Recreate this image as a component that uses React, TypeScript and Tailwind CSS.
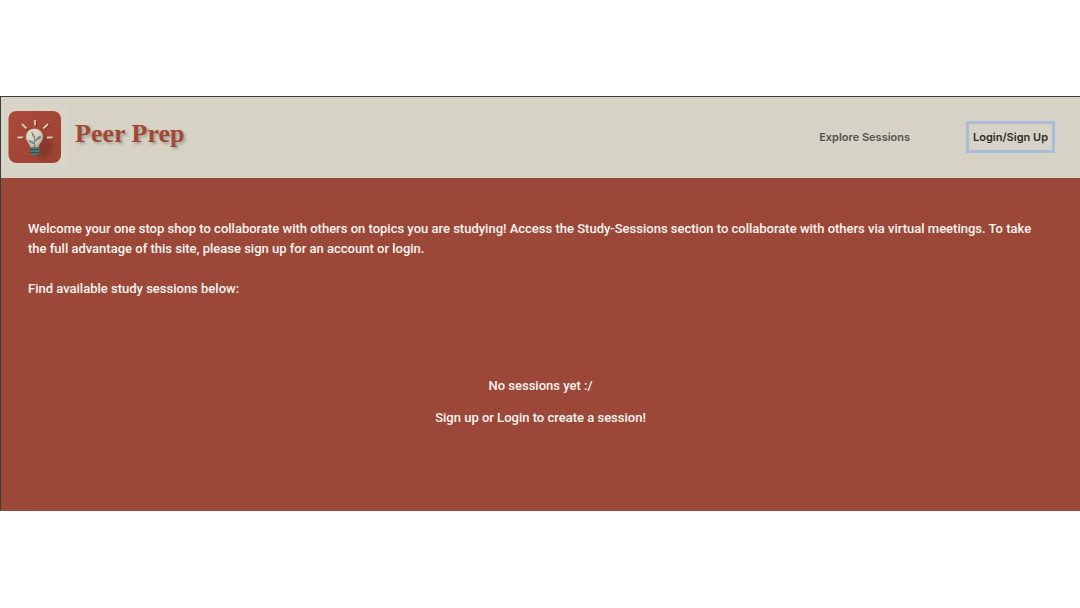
function Logo() {
  return (
    <svg viewBox="0 0 66 66" className="size-[66px] shrink-0" role="img" aria-label="Light bulb">
      <defs>
        <linearGradient id="tile" x1="0" y1="0" x2="1" y2="1">
          <stop offset="0" stopColor="#ab4a3b" />
          <stop offset="1" stopColor="#9c4234" />
        </linearGradient>
        <radialGradient id="glass" cx="0.35" cy="0.3" r="0.8">
          <stop offset="0" stopColor="#e6dfcc" />
          <stop offset="0.65" stopColor="#d3cab5" />
          <stop offset="1" stopColor="#ab9a85" />
        </radialGradient>
        <filter id="soft" x="-50%" y="-50%" width="200%" height="200%">
          <feGaussianBlur stdDeviation="2" />
        </filter>
      </defs>
      <rect width="66" height="66" fill="#d8d5c8" />
      <rect x="6.500" y="7" width="52.500" height="52" rx="8" fill="url(#tile)" />
      <path d="M38 27 L51 40 Q49 49 43 55 L31 50 Z" fill="#70291f" opacity="0.5" filter="url(#soft)" />
      <g stroke="#702d24" strokeWidth="1.6" transform="translate(1 1)">
        <path d="M33 16v5.500M20 20l4.500 4.500M46 20l-4.500 4.500M15.500 33.500h5.500M45 33.500h5.500" />
      </g>
      <g stroke="#d8c9b3" strokeWidth="1.8">
        <path d="M33 16v5.500M20 20l4.500 4.500M46 20l-4.500 4.500M15.500 33.500h5.500M45 33.500h5.500" />
      </g>
      <path
        d="M32.500 24.500c-5 0-8.500 3.700-8.500 8.300 0 4.600 3.900 6.200 4.300 10.700h8.400c.4-4.500 4.300-6.100 4.300-10.700 0-4.600-3.500-8.300-8.500-8.300z"
        fill="url(#glass)"
      />
      <g fill="none" stroke="#71908e" strokeWidth="1.4">
        <path d="M32.500 43V32M32.500 40l-5-3.500M32.500 37.500l5-4.500" />
      </g>
      <path d="M32.500 34q-3.500-2.500-3-6.500 3.500 2.500 3 6.500zM32.500 40q-4.500 0-6.500-4 4.500 0 6.500 4zM34 36.500q.5-4.500 5.500-5-.5 4.500-5.500 5z" fill="#71908e" />
      <path d="M28 43.500h9.500v5.500q-1 2.500-4.500 2.500t-5-2.500z" fill="#527476" />
      <path d="M28 45.500h9.500M28 48.500h9.500" stroke="#304d51" strokeWidth="1" />
    </svg>
  );
}

export default function App() {
  return (
    <div className="flex min-h-screen flex-col justify-center bg-white pb-[1px] font-['Inter',sans-serif]">
      <div className="border-t border-l border-[#3c3c3c] bg-[#9c4838]">
        <header className="flex items-center justify-between bg-[#d6d3c6] pt-[7px] pr-[25px] pb-2 pl-[1px]">
          <div className="flex items-center gap-[7px]">
            <Logo />
            <h1 className="pb-[6px] font-['Liberation_Serif',serif] text-[26px] leading-8 font-bold text-[#a14735] [text-shadow:2px_2px_3px_rgba(0,0,0,0.25)]">
              Peer Prep
            </h1>
          </div>
          <nav className="flex items-center gap-14 text-[11px] leading-4 font-semibold">
            <a href="#sessions" className="text-[#55534e]">
              Explore Sessions
            </a>
            <a href="#login" className="border-[3px] border-[#a9bbd9] px-1 py-[5px] text-[#2e2d2b]">
              Login/Sign Up
            </a>
          </nav>
        </header>
        <main className="px-[27px] pt-[41px] pb-[83px] font-['Roboto',sans-serif] text-[13px] leading-5 font-medium text-[#fbf4f1]">
          <p className="pr-2">
            Welcome your one stop shop to collaborate with others on topics you are studying! Access the Study-Sessions
            section to collaborate with others via virtual meetings. To take the full advantage of this site, please sign
            up for an account or login.
          </p>
          <p className="mt-5">Find available study sessions below:</p>
          <section id="sessions" className="mt-[77px] flex flex-col gap-3 text-center">
            <p>No sessions yet :/</p>
            <p>Sign up or Login to create a session!</p>
          </section>
        </main>
      </div>
    </div>
  );
}
